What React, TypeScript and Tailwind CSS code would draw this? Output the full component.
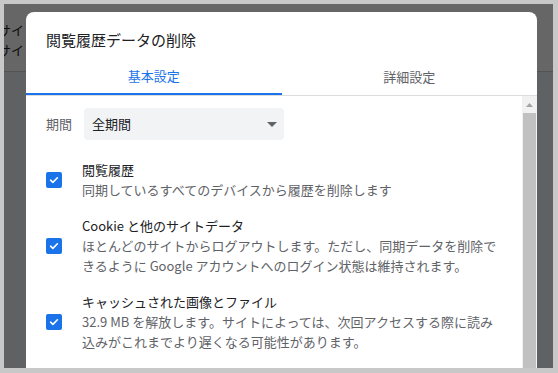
import React from "react";

interface Option {
  title: string;
  lines: string[];
}

const options: Option[] = [
  {
    title: "閲覧履歴",
    lines: ["同期しているすべてのデバイスから履歴を削除します"],
  },
  {
    title: "Cookie と他のサイトデータ",
    lines: [
      "ほとんどのサイトからログアウトします。ただし、同期データを削除で",
      "きるように Google アカウントへのログイン状態は維持されます。",
    ],
  },
  {
    title: "キャッシュされた画像とファイル",
    lines: [
      "32.9 MB を解放します。サイトによっては、次回アクセスする際に読み",
      "込みがこれまでより遅くなる可能性があります。",
    ],
  },
];

function Checkbox() {
  return (
    <div className="w-4 h-4 shrink-0 rounded-[2px] bg-[#1a73e8] flex items-center justify-center">
      <svg width="12" height="12" viewBox="0 0 12 12" fill="none">
        <path d="M2.6 6.2 L4.9 8.4 L9.4 3.8" stroke="white" strokeWidth="1.6" strokeLinecap="round" strokeLinejoin="round" />
      </svg>
    </div>
  );
}

export default function App() {
  return (
    <div
      className="w-[558px] h-[373px] bg-[#c8c8c8] pl-[4px] pt-[4px] pr-[5px] pb-[5px] overflow-hidden"
      style={{ fontFamily: '"Noto Sans CJK JP", "Noto Sans", sans-serif' }}
    >
      <div className="relative h-full overflow-hidden flex flex-col">
        {/* Page underneath the dialog */}
        <div className="absolute inset-0 flex flex-col bg-[#f1f3f4]">
          <div className="h-[68px] bg-white border-b border-[#d0d0d0] pt-[16px] -ml-[6px] text-[13px] leading-[20px] text-[#202124]">
            <div>サイト</div>
            <div>サイト</div>
          </div>
        </div>
        {/* Dim overlay */}
        <div className="absolute inset-0 bg-black/60" />

        {/* Dialog */}
        <div className="relative ml-[22px] mt-[8px] mr-[16px] flex-1 bg-white rounded-t-[8px] flex flex-col overflow-hidden">
          <div className="pl-[20px] pt-[18px] h-[46px] text-[15px] leading-[20px] text-[#202124]">
            閲覧履歴データの削除
          </div>

          <div className="flex border-b border-[#dadce0] text-[13px]">
            <div className="flex-1 h-[37px] flex items-center justify-center text-[#1a73e8] border-b-2 border-[#1a73e8] -mb-px">
              基本設定
            </div>
            <div className="flex-1 h-[37px] flex items-center justify-center text-[#5f6368]">
              詳細設定
            </div>
          </div>

          <div className="flex-1 flex min-h-0">
            <div className="flex-1 pl-[20px] pt-[12px] text-[13px] leading-[20px]">
              <div className="flex items-center">
                <span className="w-[38px] text-[#5f6368]">期間</span>
                <div className="w-[200px] h-[32px] rounded-[4px] bg-[#f1f3f4] flex items-center justify-between pl-[8px] pr-[7px] text-[#202124]">
                  <span>全期間</span>
                  <svg width="10" height="5" viewBox="0 0 10 5">
                    <path d="M0 0 L10 0 L5 5 Z" fill="#5f6368" />
                  </svg>
                </div>
              </div>

              <div className="flex flex-col gap-[16px] mt-[20px]">
                {options.map((opt) => (
                  <div key={opt.title} className="flex items-center">
                    <Checkbox />
                    <div className="ml-[20px] whitespace-nowrap">
                      <div className="text-[#202124]">{opt.title}</div>
                      {opt.lines.map((line) => (
                        <div key={line} className="text-[#5f6368]">
                          {line}
                        </div>
                      ))}
                    </div>
                  </div>
                ))}
              </div>
            </div>

            {/* Scrollbar */}
            <div className="w-[15px] bg-[#f1f1f1] flex flex-col items-center">
              <div className="h-[17px] flex items-center justify-center">
                <svg width="7" height="4" viewBox="0 0 7 4">
                  <path d="M0 4 L3.5 0 L7 4 Z" fill="#a3a3a3" />
                </svg>
              </div>
              <div className="w-[13px] flex-1 bg-[#c1c1c1]" />
            </div>
          </div>
        </div>
      </div>
    </div>
  );
}
